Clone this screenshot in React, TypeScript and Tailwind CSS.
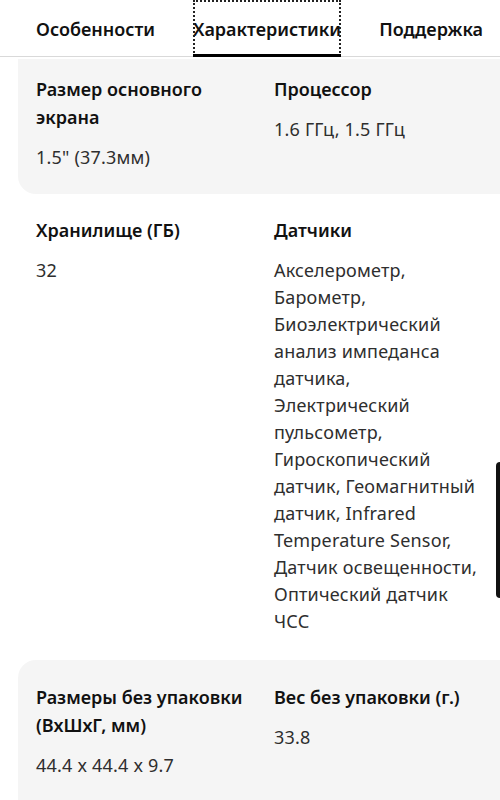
import React from "react";

const font = { fontFamily: '"Noto Sans", "Open Sans", sans-serif' };

function Spec({ label, value }: { label: string; value: React.ReactNode }) {
  return (
    <div className="flex flex-col">
      <div className="text-[18px] leading-[28px] font-semibold text-[#111]">{label}</div>
      <div className="mt-[13px] text-[18px] leading-[27px] text-[#2e2e2e] tracking-[0.2px]">{value}</div>
    </div>
  );
}

export default function App() {
  return (
    <div className="relative w-[500px] h-[800px] overflow-hidden bg-white" style={font}>
      <div className="flex h-[57px] border-b border-[#d9d9d9] pl-[36px] gap-[38px] items-stretch">
        <div className="flex items-center text-[18px] font-semibold text-[#111] pt-[3px]">Особенности</div>
        <div className="relative flex items-center text-[18px] font-semibold text-[#111] pt-[3px] outline-dotted outline-2 outline-[#222] -outline-offset-2">
          Характеристики
          <div className="absolute left-0 right-0 -bottom-[1px] h-[3px] bg-black" />
        </div>
        <div className="flex items-center text-[18px] font-semibold text-[#111] pt-[3px]">Поддержка</div>
      </div>

      <div className="ml-[18px] mt-[2px] bg-[#f5f5f5] rounded-bl-[18px] pl-[18px] pt-[16px] pb-[23px] grid grid-cols-[220px_208px] gap-x-[18px]">
        <Spec label="Размер основного экрана" value='1.5" (37.3мм)' />
        <Spec label="Процессор" value="1.6 ГГц, 1.5 ГГц" />
      </div>

      <div className="ml-[18px] pl-[18px] pt-[22px] pb-[25px] grid grid-cols-[220px_208px] gap-x-[18px]">
        <Spec label="Хранилище (ГБ)" value="32" />
        <Spec
          label="Датчики"
          value="Акселерометр, Барометр, Биоэлектрический анализ импеданса датчика, Электрический пульсометр, Гироскопический датчик, Геомагнитный датчик, Infrared Temperature Sensor, Датчик освещенности, Оптический датчик ЧСС"
        />
      </div>

      <div className="ml-[18px] bg-[#f5f5f5] rounded-l-[18px] pl-[18px] pt-[23px] pb-[200px] grid grid-cols-[220px_208px] gap-x-[18px]">
        <Spec label="Размеры без упаковки (ВхШхГ, мм)" value="44.4 x 44.4 x 9.7" />
        <Spec label="Вес без упаковки (г.)" value="33.8" />
      </div>

      <div className="absolute left-[496px] top-[462px] w-[8px] h-[136px] rounded-full bg-[#111]" />
    </div>
  );
}
